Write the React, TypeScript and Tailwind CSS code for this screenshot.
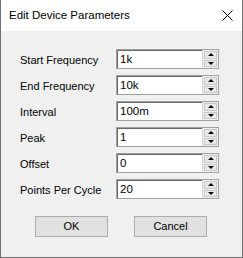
import React from "react";

type Field = { label: string; value: string };

const fields: Field[] = [
  { label: "Start Frequency", value: "1k" },
  { label: "End Frequency", value: "10k" },
  { label: "Interval", value: "100m" },
  { label: "Peak", value: "1" },
  { label: "Offset", value: "0" },
  { label: "Points Per Cycle", value: "20" },
];

function SpinBox({ value }: { value: string }) {
  return (
    <div className="flex h-[20px] w-[103px] border border-[#a0a0a0] bg-white">
      {/* sunken text area */}
      <div className="flex flex-1 items-center border-l border-t border-[#696969] pl-[2px] text-[11.5px] leading-none text-black">
        {value}
      </div>
      {/* up/down buttons */}
      <div className="flex w-[16px] flex-col gap-[1px] border-l border-[#d8d8d8] bg-[#f0f0f0] p-[1px]">
        <div className="flex flex-1 items-center justify-center border border-[#c8c8c8] bg-[#e8e8e8]">
          <svg width="6" height="3" viewBox="0 0 6 3">
            <path d="M3 0 L6 3 L0 3 Z" fill="#000" />
          </svg>
        </div>
        <div className="flex flex-1 items-center justify-center border border-[#c8c8c8] bg-[#e8e8e8]">
          <svg width="6" height="3" viewBox="0 0 6 3">
            <path d="M0 0 L6 0 L3 3 Z" fill="#000" />
          </svg>
        </div>
      </div>
    </div>
  );
}

export default function App() {
  return (
    <div
      className="flex h-[258px] w-[243px] flex-col border-x border-b border-[#707070] bg-[#f0f0f0]"
      style={{ fontFamily: '"Liberation Sans", Arial, sans-serif' }}
    >
      {/* title bar */}
      <div className="flex h-[31px] shrink-0 items-center justify-between bg-white pl-[8px] pr-[9px]">
        <span className="text-[11.5px] text-black">Edit Device Parameters</span>
        <svg width="11" height="11" viewBox="0 0 11 11">
          <path d="M0.5 0.5 L10.5 10.5 M10.5 0.5 L0.5 10.5" stroke="#000" strokeWidth="1" />
        </svg>
      </div>

      {/* fields */}
      <div className="flex flex-col gap-[6px] pl-[19px] pt-[18px]">
        {fields.map((f, idx) => (
          <div key={idx} className="flex h-[20px] items-center">
            <div className="w-[96px] pt-[2px] text-[11px] text-black">{f.label}</div>
            <SpinBox value={f.value} />
          </div>
        ))}
      </div>

      {/* buttons */}
      <div className="flex gap-[26px] pl-[34px] pt-[17px]">
        <button
          type="button"
          className="h-[21px] w-[73px] border border-[#adadad] bg-[#e1e1e1] text-[11px] text-black"
        >
          OK
        </button>
        <button
          type="button"
          className="h-[21px] w-[73px] border border-[#adadad] bg-[#e1e1e1] text-[11px] text-black"
        >
          Cancel
        </button>
      </div>
    </div>
  );
}
